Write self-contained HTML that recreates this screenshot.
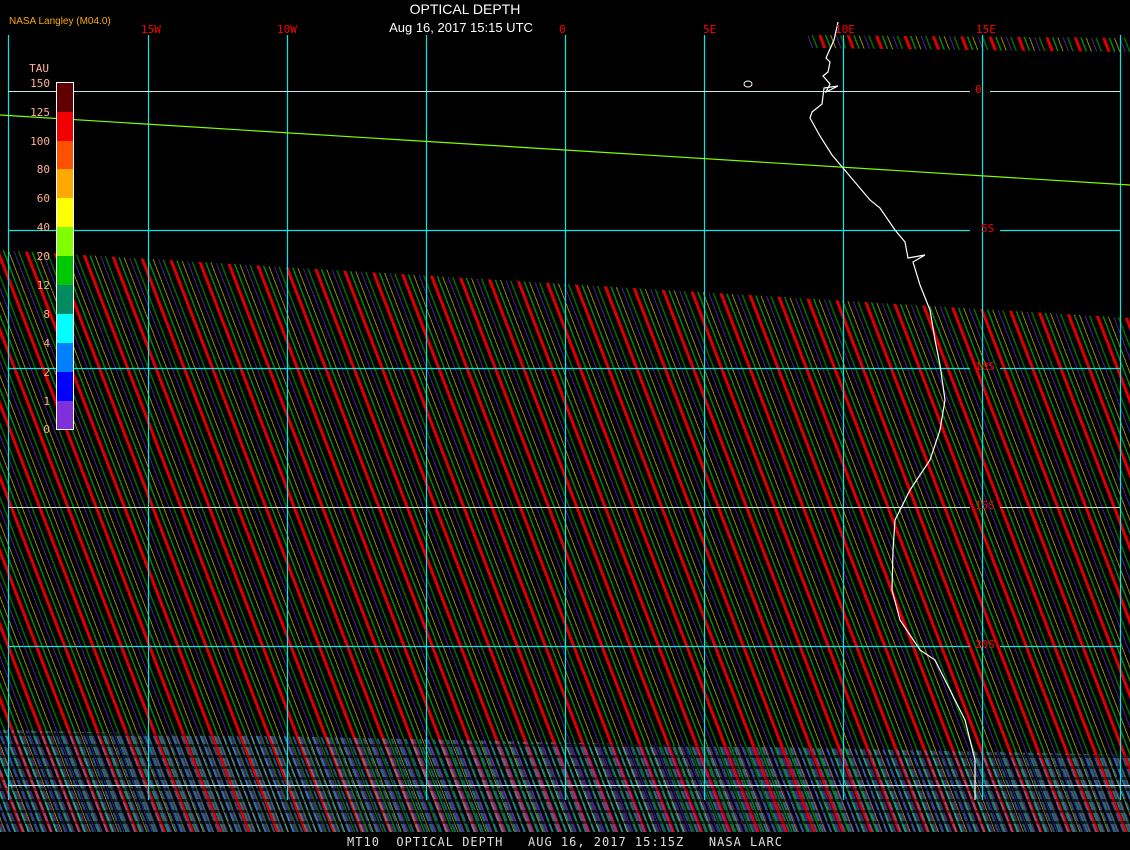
<!DOCTYPE html>
<html><head><meta charset="utf-8"><style>
html,body{margin:0;padding:0;background:#000;width:1130px;height:850px;overflow:hidden;position:relative;font-family:"Liberation Sans",sans-serif}
.h{position:absolute;left:0;top:0;width:1130px;height:850px;
background:repeating-linear-gradient(69deg,#e00000 0,#e00000 2.5px,#700000 2.5px,#700000 3.5px,#000 3.5px,#000 6px,#008800 6px,#008800 7.5px,#000 7.5px,#000 11px,#8a8a00 11px,#8a8a00 12px,#000 12px,#000 16px,#4a2090 16px,#4a2090 17px,#000 17px,#000 20px,#006a00 20px,#006a00 21.5px,#000 21.5px,#000 26.4px);}
.main{clip-path:polygon(0 250px,1130px 318px,1130px 832px,0 832px)}
.top{clip-path:polygon(808px 35px,1130px 38px,1130px 52px,808px 48px)}
.noise{position:absolute;left:0;top:730px;width:1130px;height:102px;opacity:.5;
background:repeating-linear-gradient(0deg,transparent 0,transparent 8px,rgba(0,0,0,.7) 8px,rgba(0,0,0,.7) 11px),repeating-linear-gradient(69deg,#30e0e0 0,#30e0e0 2px,#8050d0 2px,#8050d0 5px,transparent 5px,transparent 8px,#40a0ff 8px,#40a0ff 10px,transparent 10px,transparent 13px);
clip-path:polygon(0 0,1130px 25px,1130px 102px,0 102px)}
.lbl{position:absolute;color:#f00;font-size:11px;font-family:"DejaVu Sans Mono","Liberation Mono",monospace}
</style></head><body>
<div class="h main"></div>
<div class="h top"></div>
<div class="noise"></div>
<svg width="1130" height="850" style="position:absolute;left:0;top:0">
<g stroke="#00e8e8" stroke-width="1.2">
<line x1="8.5" y1="35" x2="8.5" y2="800"/><line x1="148.5" y1="35" x2="148.5" y2="800"/><line x1="287.5" y1="35" x2="287.5" y2="800"/><line x1="426.5" y1="35" x2="426.5" y2="800"/><line x1="565.5" y1="35" x2="565.5" y2="800"/><line x1="704.5" y1="35" x2="704.5" y2="800"/><line x1="843.5" y1="35" x2="843.5" y2="800"/><line x1="982.5" y1="35" x2="982.5" y2="800"/><line x1="1120.5" y1="35" x2="1120.5" y2="800"/>
<line x1="8" y1="230.5" x2="970" y2="230.5"/><line x1="1000" y1="230.5" x2="1120" y2="230.5"/>
<line x1="8" y1="368.5" x2="970" y2="368.5"/><line x1="1000" y1="368.5" x2="1120" y2="368.5"/>
<line x1="8" y1="646.5" x2="970" y2="646.5"/><line x1="1000" y1="646.5" x2="1120" y2="646.5"/>
</g>
<g stroke="#c8e8e8" stroke-width="1">
<line x1="8" y1="91.5" x2="970" y2="91.5"/><line x1="990" y1="91.5" x2="1120" y2="91.5"/>
<line x1="8" y1="507.5" x2="970" y2="507.5"/><line x1="1000" y1="507.5" x2="1120" y2="507.5"/>
<line x1="8" y1="785.5" x2="1130" y2="785.5"/>
</g>
<line x1="0" y1="115" x2="1130" y2="185" stroke="#80ff00" stroke-width="1.2"/>
<polyline fill="none" stroke="#fff" stroke-width="1.2" points="838,22 834,40 826,58 830,62 828,72 823,76 830,84 826,92 838,86 824,88 822,104 812,112 810,118 820,136 832,155 843,168 870,200 880,208 895,230 905,242 908,258 925,255 913,262 920,285 930,310 935,340 940,365 945,400 940,430 930,460 910,490 895,520 893,550 892,590 900,620 920,650 935,660 950,690 965,720 975,760 975,800"/>
<ellipse cx="748" cy="84" rx="4" ry="3" fill="none" stroke="#fff"/>
<rect x="56" y="82" width="18" height="348" fill="#fff"/>
<g>
<rect x="57" y="83" width="16" height="29" fill="#600000"/>
<rect x="57" y="112" width="16" height="29" fill="#f00000"/>
<rect x="57" y="141" width="16" height="28" fill="#ff5000"/>
<rect x="57" y="169" width="16" height="29" fill="#ffa800"/>
<rect x="57" y="198" width="16" height="29" fill="#ffff00"/>
<rect x="57" y="227" width="16" height="29" fill="#80ff00"/>
<rect x="57" y="256" width="16" height="29" fill="#00c800"/>
<rect x="57" y="285" width="16" height="29" fill="#008c60"/>
<rect x="57" y="314" width="16" height="29" fill="#00ffff"/>
<rect x="57" y="343" width="16" height="29" fill="#0080ff"/>
<rect x="57" y="372" width="16" height="29" fill="#0000ff"/>
<rect x="57" y="401" width="16" height="28" fill="#8030d8"/>
</g>
<g fill="#ffb090" font-family="DejaVu Sans Mono, Liberation Mono, monospace" font-size="11" text-anchor="end">
<text x="49" y="72">TAU</text>
<text x="50" y="87">150</text><text x="50" y="116">125</text><text x="50" y="145">100</text><text x="50" y="173">80</text><text x="50" y="202">60</text><text x="50" y="231">40</text><text x="50" y="260">20</text><text x="50" y="289">12</text><text x="50" y="318">8</text><text x="50" y="347">4</text><text x="50" y="376">2</text><text x="50" y="405">1</text><text x="50" y="433">0</text>
</g>
</svg>
<div style="position:absolute;left:9px;top:16px;color:#ffa800;font-size:10px">NASA Langley (M04.0)</div>
<div style="position:absolute;left:0;width:930px;top:1px;text-align:center;color:#fff;font-size:14px">OPTICAL DEPTH</div>
<div style="position:absolute;left:0;width:922px;top:20px;text-align:center;color:#fff;font-size:13px">Aug 16, 2017 15:15 UTC</div>
<div class="lbl" style="left:141px;top:23px">15W</div>
<div class="lbl" style="left:277px;top:23px">10W</div>
<div class="lbl" style="left:559px;top:23px">0</div>
<div class="lbl" style="left:703px;top:23px">5E</div>
<div class="lbl" style="left:835px;top:23px">10E</div>
<div class="lbl" style="left:976px;top:23px">15E</div>
<div class="lbl" style="left:975px;top:83px">0</div>
<div class="lbl" style="left:981px;top:222px">5S</div>
<div class="lbl" style="left:975px;top:360px">10S</div>
<div class="lbl" style="left:975px;top:499px">15S</div>
<div class="lbl" style="left:975px;top:638px">20S</div>
<div style="position:absolute;left:0;width:1130px;top:835px;text-align:center;color:#e0e0e0;font-size:12px;font-family:'DejaVu Sans Mono','Liberation Mono',monospace;letter-spacing:1px;white-space:pre">MT10  OPTICAL DEPTH   AUG 16, 2017 15:15Z   NASA LARC</div>
</body></html>
